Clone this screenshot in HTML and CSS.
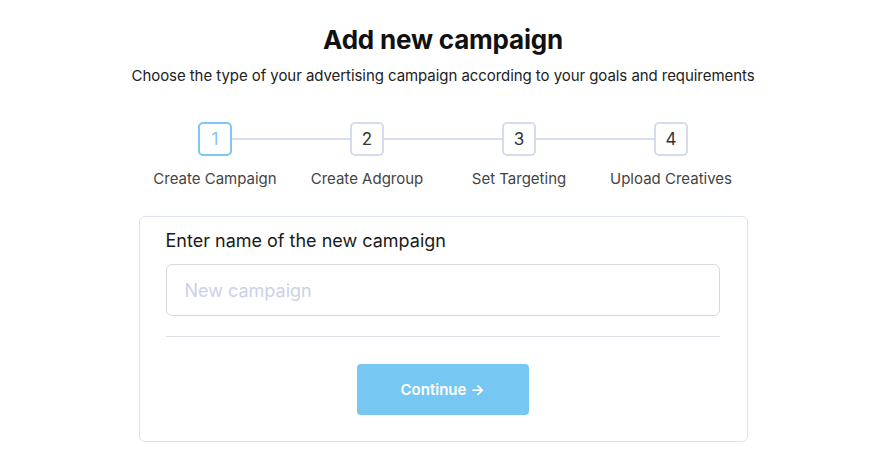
FILE: index.html
```html
<!DOCTYPE html>
<html lang="en">
<head>
<meta charset="utf-8">
<title>Add new campaign</title>
<link rel="stylesheet" href="styles.css">
</head>
<body>
<main class="page">
  <h1 class="title">Add new campaign</h1>
  <p class="subtitle">Choose the type of your advertising campaign according to your goals and requirements</p>
  <div class="stepper">
    <div class="track">
      <span class="box active">1</span>
      <span class="line"></span>
      <span class="box">2</span>
      <span class="line"></span>
      <span class="box">3</span>
      <span class="line"></span>
      <span class="box">4</span>
    </div>
    <div class="labels">
      <span>Create Campaign</span>
      <span>Create Adgroup</span>
      <span>Set Targeting</span>
      <span>Upload Creatives</span>
    </div>
  </div>
  <section class="card">
    <label class="field-label" for="name">Enter name of the new campaign</label>
    <input class="field" id="name" type="text" placeholder="New campaign">
    <hr class="divider">
    <div class="actions">
      <button class="btn" type="button">Continue →</button>
    </div>
  </section>
</main>
</body>
</html>
```

FILE: styles.css
```css
* { box-sizing: border-box; }
html, body { margin: 0; padding: 0; background: #fff; }
body {
  font-family: Inter, "Open Sans", "Liberation Sans", sans-serif;
  color: #1a1a1a;
}
.page {
  display: flex;
  flex-direction: column;
  align-items: center;
  padding-top: 24px;
}
.title {
  margin: 0;
  font-size: 26px;
  line-height: 32px;
  font-weight: 700;
  color: #111;
  letter-spacing: -0.2px;
}
.subtitle {
  margin: 10px 0 0;
  font-size: 15px;
  line-height: 20px;
  letter-spacing: -0.06px;
  color: #222;
}
.stepper {
  width: 608px;
  margin-top: 36px;
}
.track {
  display: flex;
  align-items: center;
  padding: 0 59px;
}
.box {
  width: 34px;
  height: 34px;
  flex: none;
  border: 2px solid #d5dbeb;
  border-radius: 5px;
  display: flex;
  align-items: center;
  justify-content: center;
  font-size: 17px;
  color: #333;
  background: #fff;
}
.box.active {
  border-color: #7cc8f0;
  color: #7cc8f0;
}
.line {
  flex: 1;
  height: 2px;
  background: #d7def0;
}
.labels {
  display: grid;
  grid-template-columns: repeat(4, 1fr);
  margin-top: 13px;
  text-align: center;
  font-size: 15px;
  line-height: 20px;
  color: #444;
}
.card {
  width: 609px;
  margin-top: 27px;
  border: 1px solid #dde2f0;
  border-radius: 6px;
  padding: 12px 27px 26px 26px;
  display: flex;
  flex-direction: column;
}
.field-label {
  font-size: 18px;
  line-height: 24px;
  color: #1a1a1a;
  margin-bottom: 11px;
}
.field {
  height: 52px;
  border: 1px solid #d6d9e0;
  border-radius: 6px;
  padding: 0 18px;
  font-family: inherit;
  font-size: 18px;
  color: #1a1a1a;
  outline: none;
}
.field::placeholder { color: #c9d2e6; }
.divider {
  border: none;
  height: 1px;
  background: #dcdfe6;
  margin: 20px 0 0;
}
.actions {
  display: flex;
  justify-content: center;
  margin-top: 27px;
}
.btn {
  width: 172px;
  height: 51px;
  border: none;
  border-radius: 4px;
  background: #76c8f2;
  color: #fff;
  font-family: inherit;
  font-size: 15px;
  font-weight: 600;
  cursor: pointer;
}
```
